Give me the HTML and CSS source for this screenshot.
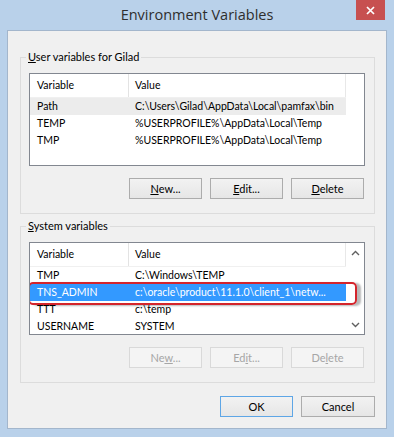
FILE: index.html
```html
<!DOCTYPE html>
<html>
<head>
<meta charset="utf-8">
<title>Environment Variables</title>
<link rel="stylesheet" href="styles.css">
</head>
<body>
<div class="window">
  <div class="titlebar">
    <span class="spacer"></span>
    <div class="title">Environment Variables</div>
    <button class="close" aria-label="Close">
      <svg width="9" height="9" viewBox="0 0 9 9"><path d="M1 1 L8 8 M8 1 L1 8" stroke="#fff" stroke-width="1.7" fill="none"/></svg>
    </button>
  </div>
  <div class="panel">
    <fieldset class="group">
      <legend><u>U</u>ser variables for Gilad</legend>
      <div class="list">
        <div class="cols">
          <div class="row head"><span class="c1">Variable</span><span class="c2">Value</span></div>
          <div class="row hover"><span class="c1">Path</span><span class="c2">C:\Users\Gilad\AppData\Local\pamfax\bin</span></div>
          <div class="row"><span class="c1">TEMP</span><span class="c2">%USERPROFILE%\AppData\Local\Temp</span></div>
          <div class="row"><span class="c1">TMP</span><span class="c2">%USERPROFILE%\AppData\Local\Temp</span></div>
        </div>
      </div>
      <div class="buttons">
        <button class="btn"><u>N</u>ew...</button>
        <button class="btn"><u>E</u>dit...</button>
        <button class="btn"><u>D</u>elete</button>
      </div>
    </fieldset>
    <fieldset class="group second">
      <legend><u>S</u>ystem variables</legend>
      <div class="list">
        <div class="cols">
          <div class="row head"><span class="c1">Variable</span><span class="c2">Value</span></div>
          <div class="row"><span class="c1">TMP</span><span class="c2">C:\Windows\TEMP</span></div>
          <div class="row selected"><span class="c1">TNS_ADMIN</span><span class="c2">c:\oracle\product\11.1.0\client_1\netw...</span></div>
          <div class="row"><span class="c1">TTT</span><span class="c2">c:\temp</span></div>
          <div class="row"><span class="c1">USERNAME</span><span class="c2">SYSTEM</span></div>
        </div>
        <div class="scrollbar">
          <svg width="9" height="6" viewBox="0 0 9 6"><path d="M1 5 L4.5 1.5 L8 5" stroke="#606060" stroke-width="1.4" fill="none"/></svg>
          <svg width="9" height="6" viewBox="0 0 9 6"><path d="M1 1 L4.5 4.5 L8 1" stroke="#606060" stroke-width="1.4" fill="none"/></svg>
        </div>
      </div>
      <div class="buttons">
        <button class="btn" disabled>Ne<u>w</u>...</button>
        <button class="btn" disabled>Ed<u>i</u>t...</button>
        <button class="btn" disabled>De<u>l</u>ete</button>
      </div>
    </fieldset>
    <div class="dialog-buttons">
      <button class="btn default">OK</button>
      <button class="btn cancel">Cancel</button>
    </div>
  </div>
</div>
</body>
</html>
```

FILE: styles.css
```css
* { box-sizing: border-box; }
html, body { margin: 0; padding: 0; }
body {
  background: #b9d1ea;
  font-family: Lato, "Noto Sans", sans-serif;
  font-size: 10.5px;
  color: #000;
  width: 394px;
  height: 437px;
  overflow: hidden;
}
.window { display: flex; flex-direction: column; }
.titlebar {
  height: 30px;
  display: grid;
  grid-template-columns: 1fr auto 1fr;
}
.title {
  font-family: "Open Sans", "Noto Sans", sans-serif;
  font-size: 14.5px;
  color: #2e2e2e;
  line-height: 30px;
}
.close {
  justify-self: end;
  align-self: start;
  width: 29px;
  height: 20px;
  margin-right: 9px;
  border: 0;
  padding: 0;
  background: #c75050;
  display: flex;
  align-items: center;
  justify-content: center;
}
.panel {
  margin: 0 7px 8px;
  height: 399px;
  background: #f0f0f0;
  border: 1px solid #a3b6cc;
  padding: 18px 11px 0 12px;
  display: flex;
  flex-direction: column;
}
.group {
  margin: 0;
  border: 1px solid #dcdcdc;
  padding: 8px 9px 14px 8px;
  min-width: 0;
}
.group.second { margin-top: 4px; }
legend {
  padding: 0 2px;
  margin-left: -3px;
  line-height: 16px;
  font-size: 11px;
  color: #000;
}
.list {
  height: 93px;
  border: 1px solid #828790;
  background: #fff;
  display: flex;
  overflow: hidden;
}
.cols { width: 316px; flex: none; }
.row {
  display: flex;
  height: 17px;
  line-height: 17px;
  white-space: nowrap;
}
.row.head {
  height: 24px;
  line-height: 23px;
  border-bottom: 1px solid #f0f0f0;
}
.row.head .c1 { border-right: 1px solid #e3e3e3; }
.row.head .c2 { border-right: 1px solid #e8e8e8; }
.c1 { width: 99px; padding-left: 7px; flex: none; }
.c2 { flex: 1; padding-left: 6px; }
.row.hover { background: #ececec; }
.row.selected {
  background: #3399ff;
  color: #fff;
  position: relative;
}
.row.selected::after {
  content: "";
  position: absolute;
  left: -2px;
  right: -11px;
  top: -2px;
  bottom: -4px;
  border: 2px solid #d4252c;
  border-radius: 5px;
  box-shadow: 4px 1px 2px rgba(0,0,0,0.28);
}
.scrollbar {
  flex: 1;
  display: flex;
  flex-direction: column;
  justify-content: space-between;
  align-items: center;
  padding: 7px 0 6px;
  background: #fff;
}
.buttons {
  margin-top: 12px;
  display: flex;
  justify-content: flex-end;
  gap: 8px;
  padding-right: 1px;
}
.btn {
  width: 73px;
  height: 21px;
  padding: 0;
  font-family: Lato, "Noto Sans", sans-serif;
  font-size: 11px;
  color: #000;
  border: 1px solid #acacac;
  background: linear-gradient(#f2f2f2, #e6e6e6);
}
.btn:disabled {
  color: #a6a6a6;
  border-color: #d9d9d9;
  background: #f4f4f4;
}
.dialog-buttons {
  margin-top: 13px;
  display: flex;
  justify-content: flex-end;
  gap: 8px;
}
.btn.default { border-color: #5ea6e6; }
.btn.cancel { width: 74px; }
```
